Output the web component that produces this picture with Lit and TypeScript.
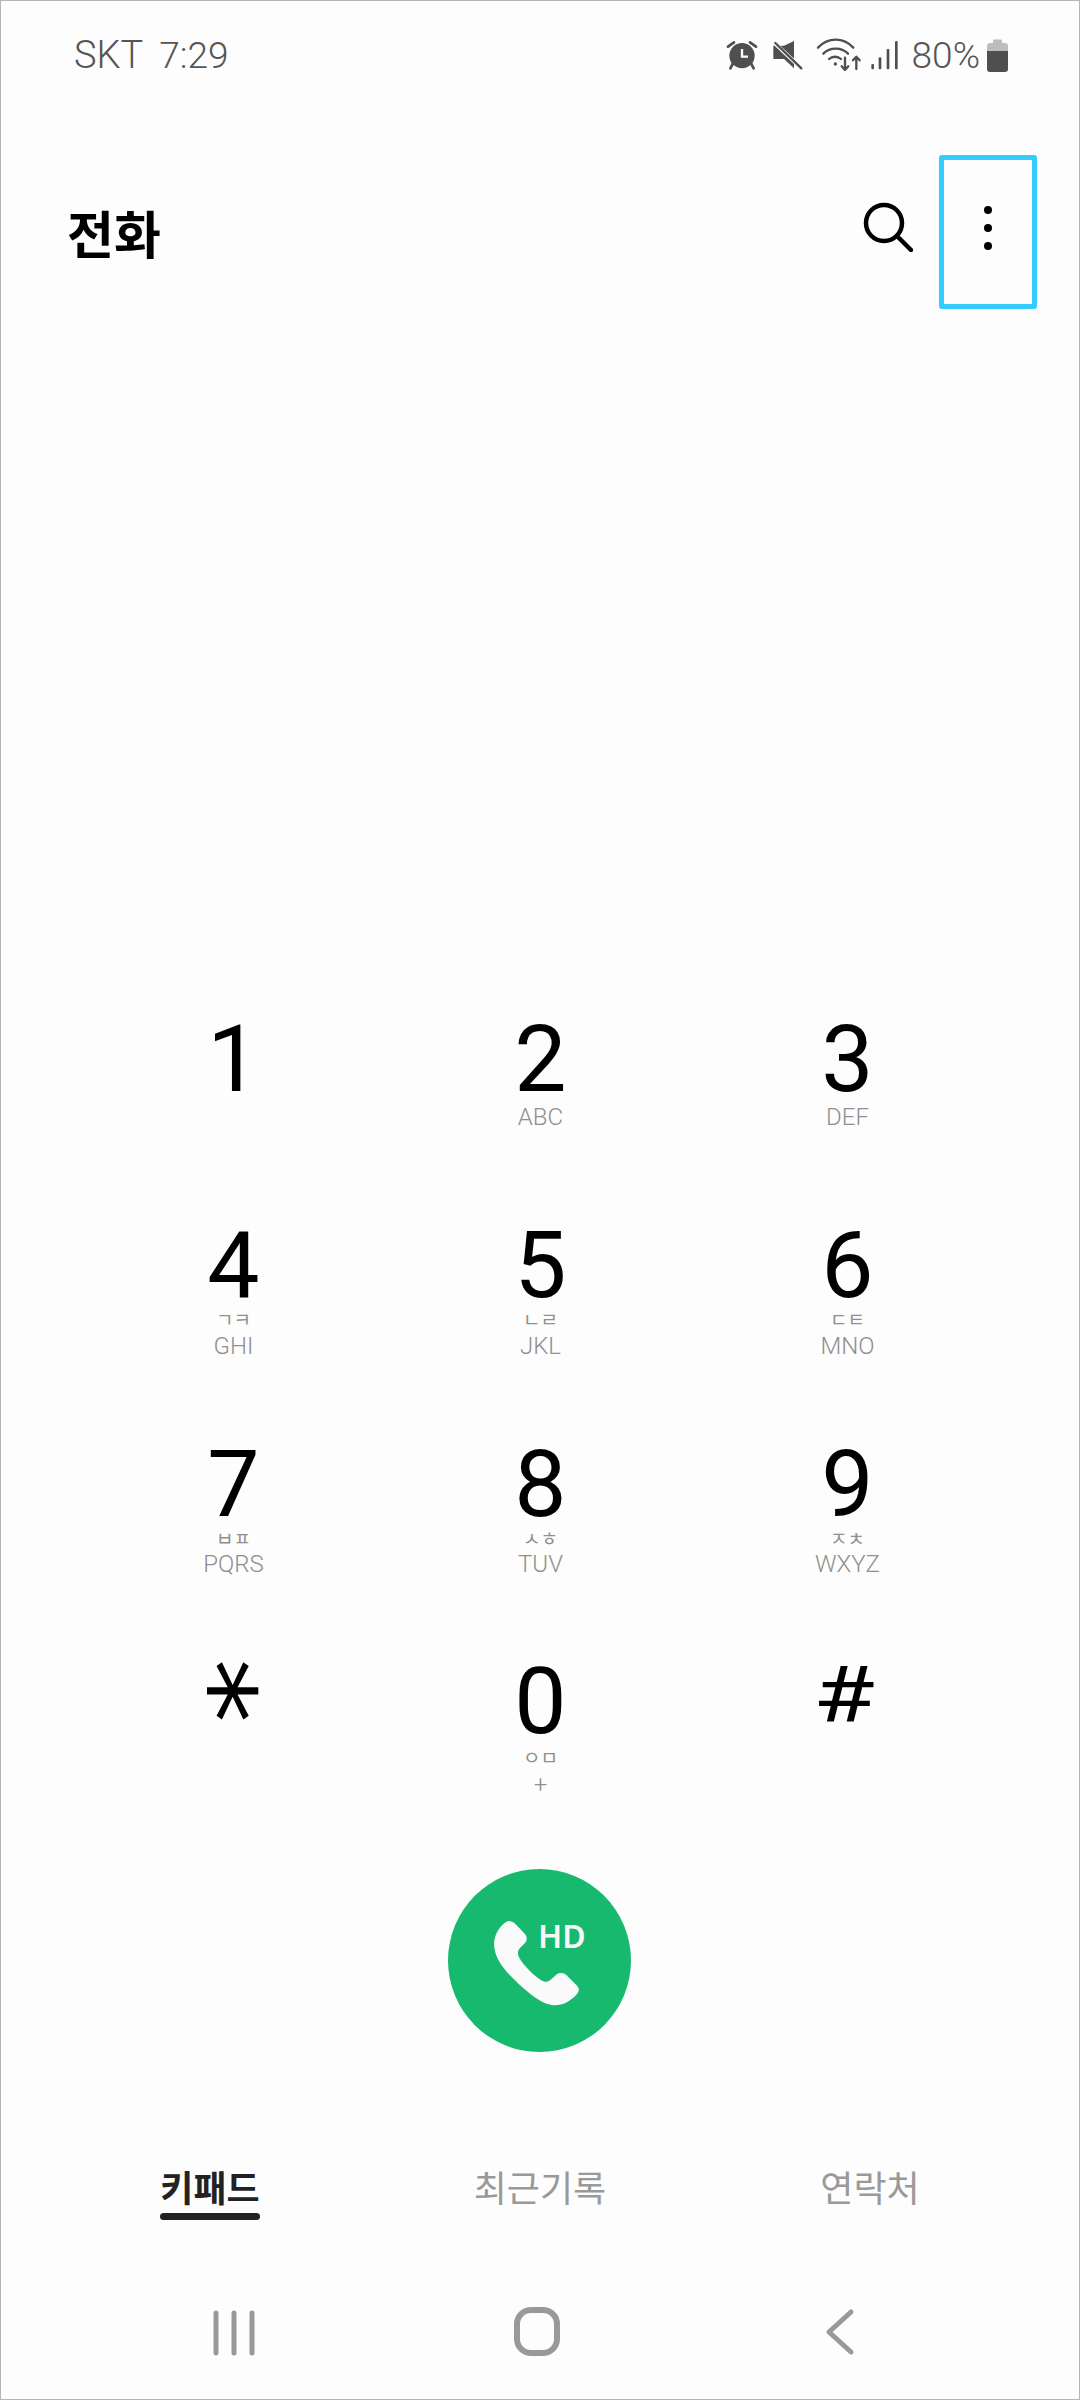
import { LitElement, css, html } from "lit";
import { customElement } from "lit/decorators.js";

const keys = [
  { d: "1", row: "r1" },
  { d: "2", l: "ABC", row: "r1" },
  { d: "3", l: "DEF", row: "r1" },
  { d: "4", k: "ㄱㅋ", l: "GHI", row: "r2" },
  { d: "5", k: "ㄴㄹ", l: "JKL", row: "r2" },
  { d: "6", k: "ㄷㅌ", l: "MNO", row: "r2" },
  { d: "7", k: "ㅂㅍ", l: "PQRS", row: "r3" },
  { d: "8", k: "ㅅㅎ", l: "TUV", row: "r3" },
  { d: "9", k: "ㅈㅊ", l: "WXYZ", row: "r3" },
  { d: "*", row: "r4 star" },
  { d: "0", k: "ㅇㅁ", l: "+", row: "r4" },
  { d: "#", row: "r4 hash" },
];

@customElement("app-root")
export class AppRoot extends LitElement {
  static styles = css`
    :host {
      display: flex;
      flex-direction: column;
      width: 1080px;
      height: 2400px;
      background: #fdfdfd;
      box-shadow: inset 0 0 0 1px #b5b5b5;
      font-family: Roboto, "Noto Sans CJK KR", sans-serif;
      overflow: hidden;
    }
    svg {
      display: block;
      flex: none;
    }

    .status {
      display: flex;
      align-items: center;
      height: 110px;
      padding: 0 71px 0 74px;
      color: #555;
      font-size: 38px;
      font-weight: 300;
    }
    .carrier {
      margin-right: 16px;
    }
    .time {
      flex: 1;
      font-size: 37px;
    }
    .icons {
      display: flex;
      align-items: center;
      gap: 12px;
    }
    .alarm {
      margin-right: 2px;
    }
    .signal {
      margin-left: -4px;
    }
    .pct {
      font-size: 37px;
    }
    .battery {
      margin-left: -6px;
    }

    .header {
      display: flex;
      align-items: center;
      height: 154px;
      margin-top: 45px;
      padding: 0 43px 0 67px;
    }
    .title {
      flex: 1;
      color: #000;
      font: 700 51px/1 "Noto Sans CJK KR", sans-serif;
    }
    .search {
      margin: 0 26px 10px 0;
    }
    .more {
      display: flex;
      flex-direction: column;
      align-items: center;
      justify-content: center;
      gap: 10px;
      box-sizing: border-box;
      width: 98px;
      height: 154px;
      padding-bottom: 8px;
      border: 5px solid #33ccff;
      border-radius: 3px;
    }
    .more i {
      width: 8px;
      height: 8px;
      border-radius: 50%;
      background: #000;
    }

    .keypad {
      display: grid;
      grid-template-columns: repeat(3, 307px);
      grid-template-rows: 206px 219px 217px 210px;
      margin-top: 708px;
      padding-left: 80px;
    }
    .key {
      display: flex;
      flex-direction: column;
      align-items: center;
    }
    .digit {
      height: 86px;
      color: #000;
      font-size: 93px;
      line-height: 86px;
    }
    .star .digit {
      height: 100px;
      margin: -18px 40px 0 0;
      font: 400 118px/100px "DejaVu Sans", sans-serif;
      transform: rotate(90deg) scale(1.1, 0.95);
    }
    .hash .digit {
      margin: -6px 6px 0 0;
      font-size: 78px;
      transform: scaleX(1.28);
    }
    .kor {
      color: #8f8f8f;
      font: 400 19px/20px "Noto Sans CJK KR", sans-serif;
    }
    .lat {
      color: #8f8f8f;
      font-size: 24px;
      font-weight: 300;
      line-height: 26px;
    }
    .r1 .lat {
      margin-top: 1px;
    }
    .r2 .lat {
      margin-top: 4px;
    }
    .r3 .lat {
      margin-top: 3px;
    }
    .r4 .kor {
      margin-top: 2px;
    }
    .r4 .lat {
      margin-top: 5px;
    }

    .call {
      position: relative;
      align-self: center;
      width: 183px;
      height: 183px;
      margin-left: -1px;
      border-radius: 50%;
      background: #17b96f;
    }
    .hd {
      position: absolute;
      left: 90px;
      top: 47px;
      color: #f6f6f6;
      font: 600 32px/40px "Noto Sans", sans-serif;
    }

    .tabs {
      display: grid;
      grid-template-columns: repeat(3, 330px);
      height: 78px;
      margin-top: 109px;
      padding-left: 45px;
    }
    .tab {
      justify-self: center;
      color: #999;
      font: 400 36px/50px "Noto Sans CJK KR", sans-serif;
    }
    .tab.on {
      color: #222;
      font-weight: 700;
    }
    .tab.on::after {
      content: "";
      display: block;
      height: 7px;
      margin-top: 2px;
      border-radius: 4px;
      background: #222;
    }

    .nav {
      display: grid;
      grid-template-columns: repeat(3, 306px);
      justify-items: center;
      margin-top: 63px;
      padding-left: 81px;
    }
  `;

  render() {
    return html`
      <div class="status">
        <span class="carrier">SKT</span><span class="time">7:29</span>
        <div class="icons">
          <svg class="alarm" width="32" height="31" viewBox="140 118 96 93" fill="#4f4f4f">
            <path d="M146 138l18-13M230 138l-18-13" stroke="#4f4f4f" stroke-width="8" stroke-linecap="round" />
            <path d="M160 190l-7 13M216 190l7 13" stroke="#4f4f4f" stroke-width="8" stroke-linecap="round" />
            <circle cx="188" cy="165" r="38" />
            <path d="M188 145v23h18" fill="none" stroke="#fdfdfd" stroke-width="7" />
          </svg>
          <svg width="32" height="32" viewBox="276 116 96 96" fill="#4f4f4f">
            <path d="M342 122v82l-30-28h-32v-40h32z" />
            <path d="M284 128l80 76" stroke="#fdfdfd" stroke-width="12" />
            <path d="M286 128l78 76" stroke="#4f4f4f" stroke-width="7" stroke-linecap="round" />
          </svg>
          <svg width="46" height="36" viewBox="408 110 138 108" fill="none" stroke="#4f4f4f" stroke-width="7" stroke-linecap="round" stroke-linejoin="round">
            <path d="M414 142c30-32 76-32 106 0" />
            <path d="M430 160c20-20 54-20 74 0" />
            <path d="M447 176c10-9 26-9 36 0" />
            <circle cx="466" cy="191" r="5" fill="#4f4f4f" stroke="none" />
            <path d="M495 172v36M485 198l10 11 10-11" />
            <path d="M529 206v-36M519 180l10-11 10 11" />
          </svg>
          <svg class="signal" width="30" height="30" viewBox="570 118 90 90" fill="#4f4f4f">
            <rect x="574" y="190" width="8" height="16" rx="3" />
            <rect x="596" y="170" width="8" height="36" rx="3" />
            <rect x="620" y="145" width="8" height="61" rx="3" />
            <rect x="645" y="121" width="8" height="85" rx="3" />
          </svg>
          <span class="pct">80%</span>
          <svg class="battery" width="23" height="33" viewBox="0 0 23 33">
            <path d="M7 1.5a1 1 0 0 1 1-1h7a1 1 0 0 1 1 1V4h3a3 3 0 0 1 3 3v6H1V7a3 3 0 0 1 3-3h3z" fill="#bdbdbd" />
            <path d="M1 12h21v18a3 3 0 0 1-3 3H4a3 3 0 0 1-3-3z" fill="#4f4f4f" />
          </svg>
        </div>
      </div>

      <div class="header">
        <div class="title">전화</div>
        <svg class="search" width="50" height="50" viewBox="0 0 50 50" fill="none" stroke="#000" stroke-width="4.5" stroke-linecap="round">
          <circle cx="21" cy="21" r="18" />
          <path d="M34 34l14 14" />
        </svg>
        <div class="more"><i></i><i></i><i></i></div>
      </div>

      <div class="keypad">
        ${keys.map(
          (key) => html`
            <div class="key ${key.row}">
              <div class="digit">${key.d}</div>
              ${key.k ? html`<div class="kor">${key.k}</div>` : ""}
              ${key.l ? html`<div class="lat">${key.l}</div>` : ""}
            </div>
          `
        )}
      </div>

      <div class="call">
        <svg width="183" height="183" viewBox="145 87 548 548" fill="#fafafa">
          <path d="M322 244C335 240 345 250 352 257L374 280C384 290 382 302 374 310L362 322C354 330 352 340 358 352C372 378 410 415 430 423C442 428 450 422 456 416L470 403C480 396 492 398 500 405L530 435C540 445 538 455 530 463C510 485 485 497 460 495C420 492 370 445 335 410C305 378 285 350 283 315C282 285 300 255 322 244Z" />
        </svg>
        <span class="hd">HD</span>
      </div>

      <div class="tabs">
        <div class="tab on">키패드</div>
        <div class="tab">최근기록</div>
        <div class="tab">연락처</div>
      </div>

      <div class="nav">
        <svg width="60" height="60" viewBox="0 0 60 60" fill="none" stroke="#999" stroke-width="5" stroke-linecap="round">
          <path d="M12 11v40M30 11v40M48 11v40" />
        </svg>
        <svg width="60" height="60" viewBox="0 0 60 60" fill="none" stroke="#999" stroke-width="6">
          <rect x="7" y="8" width="40" height="43" rx="14" />
        </svg>
        <svg width="60" height="60" viewBox="0 0 60 60" fill="none" stroke="#999" stroke-width="5" stroke-linecap="round" stroke-linejoin="round">
          <path d="M35 10L13 30l22 20" />
        </svg>
      </div>
    `;
  }
}
